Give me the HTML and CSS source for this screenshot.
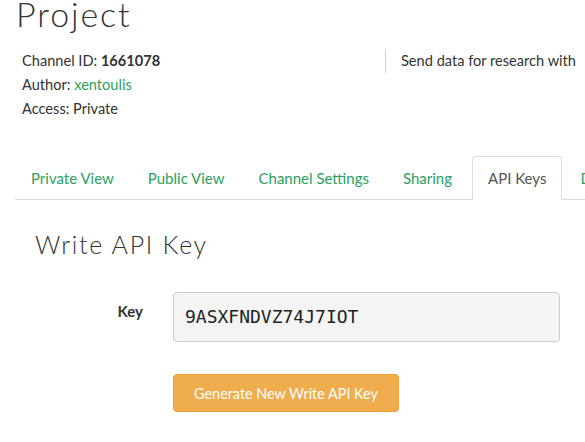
FILE: index.html
```html
<!DOCTYPE html>
<html>
<head>
<meta charset="utf-8">
<link rel="stylesheet" href="styles.css">
</head>
<body>
<div class="page">
  <h1 class="title">Project</h1>
  <div class="meta">
    <div class="meta-left">
      <p>Channel ID: <strong>1661078</strong></p>
      <p>Author: <a class="link">xentoulis</a></p>
      <p>Access: Private</p>
    </div>
    <div class="meta-right">
      <p>Send data for research with</p>
    </div>
  </div>
  <ul class="tabs">
    <li class="tab"><a>Private View</a></li>
    <li class="tab"><a>Public View</a></li>
    <li class="tab"><a>Channel Settings</a></li>
    <li class="tab"><a>Sharing</a></li>
    <li class="tab active"><a>API Keys</a></li>
    <li class="tab"><a>Data Import / Export</a></li>
  </ul>
  <div class="tab-content">
    <h2 class="section-title">Write API Key</h2>
    <div class="form-row">
      <label class="form-label">Key</label>
      <div class="key-input">9ASXFNDVZ74J7IOT</div>
    </div>
    <div class="btn-row">
      <button class="btn-warning">Generate New Write API Key</button>
    </div>
  </div>
</div>
</body>
</html>
```

FILE: styles.css
```css
html, body {
  margin: 0;
  padding: 0;
  background: #fff;
  overflow: hidden;
}
body {
  font-family: "Lato", "Liberation Sans", sans-serif;
  font-size: 14.6px;
  color: #333;
}
.page {
  padding: 0 15px;
  width: 700px;
}
.title {
  font-family: "Lato", sans-serif;
  font-weight: 300;
  font-size: 34px;
  line-height: 40px;
  margin: -6px 0 0 1px;
  color: #333;
  letter-spacing: 1.9px;
}
.meta {
  display: flex;
  margin-top: 15px;
}
.meta p {
  margin: 0;
  line-height: 24px;
}
.meta-left {
  width: 363px;
  padding-left: 7px;
}
.meta-left strong {
  font-weight: 700;
}
.link {
  color: #2ba15e;
}
.meta-right {
  border-left: 1px solid #ccc;
  padding-left: 15px;
  align-self: flex-start;
}
.tabs {
  list-style: none;
  margin: 35px 0 0 0;
  padding: 0;
  display: flex;
  border-bottom: 1px solid #ddd;
  white-space: nowrap;
  font-size: 15px;
}
.tab {
  margin-right: 2px;
  margin-bottom: -1px;
}
.tab a {
  display: block;
  padding: 10px 15px;
  line-height: 22px;
  border: 1px solid transparent;
  border-radius: 4px 4px 0 0;
  color: #2ba15e;
}
.tab.active {
  margin-left: 2px;
}
.tab.active a {
  border-color: #ddd;
  border-bottom-color: #fff;
  background: #fff;
  color: #555;
}
.tab-content {
  padding-left: 20px;
}
.section-title {
  font-family: "Lato", sans-serif;
  font-weight: 300;
  font-size: 25px;
  line-height: 30px;
  margin: 29px 0 0 0;
  color: #333;
  letter-spacing: 1.7px;
}
.form-row {
  display: flex;
  margin-top: 33px;
  margin-left: -20px;
}
.form-label {
  width: 128px;
  text-align: right;
  font-weight: 700;
  padding-top: 8px;
  line-height: 22px;
  font-size: 15px;
  color: #333;
}
.key-input {
  margin-left: 30px;
  width: 374px;
  height: 48px;
  box-sizing: content-box;
  border: 1px solid #ccc;
  border-radius: 4px;
  background: #f4f4f4;
  padding-left: 11px;
  font-family: "DejaVu Sans Mono", monospace;
  font-size: 18px;
  line-height: 48px;
  color: #222;
}
.btn-row {
  margin-top: 32px;
  margin-left: 138px;
}
.btn-warning {
  width: 226px;
  height: 38px;
  background: #f0ad4e;
  border: 1px solid #eea236;
  border-radius: 4px;
  color: #fff;
  font-family: "Lato", sans-serif;
  font-size: 14.4px;
  padding: 0;
}
```
